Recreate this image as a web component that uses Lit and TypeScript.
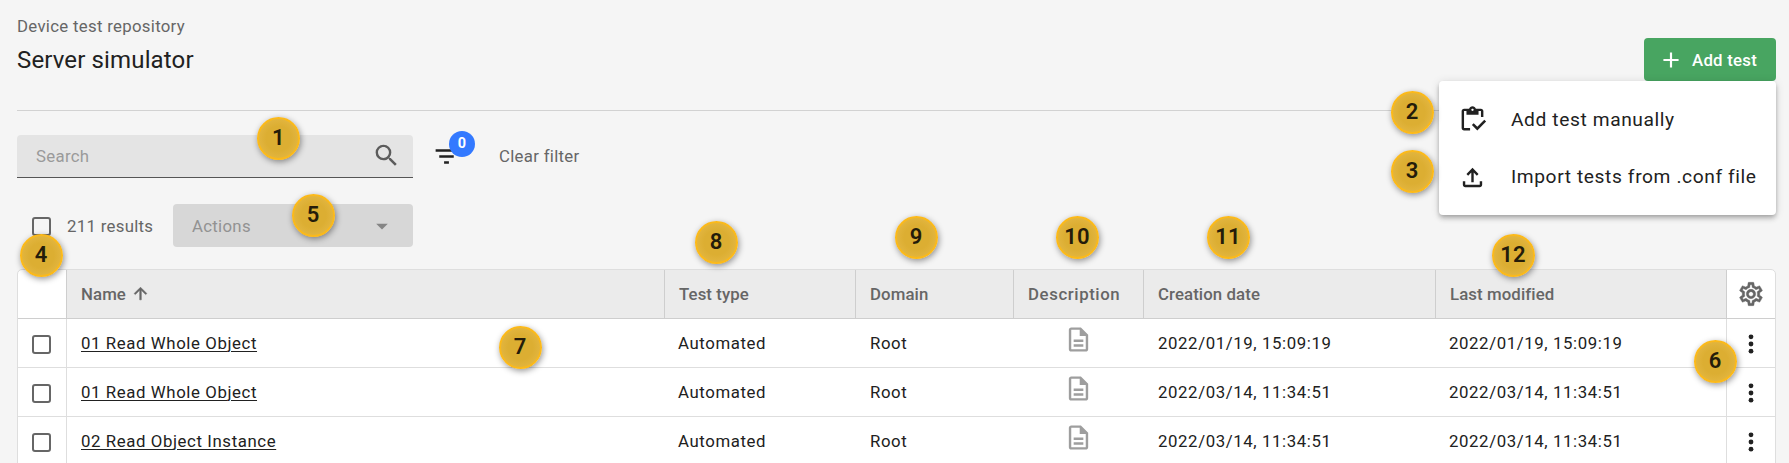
import { LitElement, html, css, svg } from "lit";
import { customElement } from "lit/decorators.js";
import { styleMap } from "lit/directives/style-map.js";

interface Row { name: string; type: string; domain: string; created: string; modified: string; }

const ROWS: Row[] = [
  { name: "01 Read Whole Object", type: "Automated", domain: "Root", created: "2022/01/19, 15:09:19", modified: "2022/01/19, 15:09:19" },
  { name: "01 Read Whole Object", type: "Automated", domain: "Root", created: "2022/03/14, 11:34:51", modified: "2022/03/14, 11:34:51" },
  { name: "02 Read Object Instance", type: "Automated", domain: "Root", created: "2022/03/14, 11:34:51", modified: "2022/03/14, 11:34:51" },
];

// Callout centres on the page canvas.
const MARKERS: [number, number, number][] = [
  [1, 278.3, 138.3], [2, 1412.1, 112.1], [3, 1412.1, 171.1], [4, 41.2, 255.1],
  [5, 313.1, 215.1], [6, 1715.1, 361.1], [7, 520.1, 347.1], [8, 716.1, 242.1],
  [9, 916.1, 237.1], [10, 1077.1, 237.1], [11, 1228.1, 237.1], [12, 1513.1, 255.1],
];

const ICONS = {
  search: svg`<path d="M15.5 14h-.79l-.28-.27A6.471 6.471 0 0 0 16 9.5 6.5 6.5 0 1 0 9.5 16c1.61 0 3.09-.59 4.23-1.57l.27.28v.79l5 4.99L20.49 19l-4.99-5zm-6 0C7.01 14 5 11.99 5 9.5S7.01 5 9.5 5 14 7.01 14 9.5 11.99 14 9.5 14z"/>`,
  filter: svg`<path d="M10 18h4v-2h-4v2zM3 6v2h18V6H3zm3 7h12v-2H6v2z"/>`,
  plus: svg`<path d="M19 13h-6v6h-2v-6H5v-2h6V5h2v6h6v2z"/>`,
  up: svg`<path d="M4 12l1.41 1.41L11 7.83V20h2V7.83l5.58 5.59L20 12l-8-8-8 8z"/>`,
  gear: svg`<path d="M19.43 12.98c.04-.32.07-.64.07-.98 0-.34-.03-.66-.07-.98l2.11-1.65c.19-.15.24-.42.12-.64l-2-3.46a.5.5 0 0 0-.61-.22l-2.49 1c-.52-.4-1.08-.73-1.69-.98l-.38-2.65A.488.488 0 0 0 14 2h-4c-.25 0-.46.18-.49.42l-.38 2.65c-.61.25-1.17.59-1.69.98l-2.49-1a.566.566 0 0 0-.18-.03c-.17 0-.34.09-.43.25l-2 3.46c-.13.22-.07.49.12.64l2.11 1.65c-.04.32-.07.65-.07.98 0 .33.03.66.07.98l-2.11 1.65c-.19.15-.24.42-.12.64l2 3.46a.5.5 0 0 0 .61.22l2.49-1c.52.4 1.08.73 1.69.98l.38 2.65c.03.24.24.42.49.42h4c.25 0 .46-.18.49-.42l.38-2.65c.61-.25 1.17-.59 1.69-.98l2.49 1c.06.02.12.03.18.03.17 0 .34-.09.43-.25l2-3.46c.12-.22.07-.49-.12-.64l-2.11-1.65zm-1.98-1.71c.04.31.05.52.05.73 0 .21-.02.43-.05.73l-.14 1.13.89.7 1.08.84-.7 1.21-1.27-.51-1.04-.42-.9.68c-.43.32-.84.56-1.25.73l-1.06.43-.16 1.13-.2 1.35h-1.4l-.19-1.35-.16-1.13-1.06-.43c-.43-.18-.83-.41-1.23-.71l-.91-.7-1.06.43-1.27.51-.7-1.21 1.08-.84.89-.7-.14-1.13c-.03-.31-.05-.54-.05-.74s.02-.43.05-.73l.14-1.13-.89-.7-1.08-.84.7-1.21 1.27.51 1.04.42.9-.68c.43-.32.84-.56 1.25-.73l1.06-.43.16-1.13.2-1.35h1.39l.19 1.35.16 1.13 1.06.43c.43.18.83.41 1.23.71l.91.7 1.06-.43 1.27-.51.7 1.21-1.07.85-.89.7.14 1.13zM12 8c-2.21 0-4 1.79-4 4s1.79 4 4 4 4-1.79 4-4-1.79-4-4-4zm0 6c-1.1 0-2-.9-2-2s.9-2 2-2 2 .9 2 2-.9 2-2 2z"/>`,
  doc: svg`<path fill-rule="evenodd" d="M8 16h8v2H8zm0-4h8v2H8zm6-10H6c-1.1 0-2 .9-2 2v16c0 1.1.89 2 1.99 2H18c1.1 0 2-.9 2-2V8l-6-6zm4 18H6V4h7v5h5v11z"/>`,
  dots: svg`<circle cx="12" cy="4.8" r="2.4"/><circle cx="12" cy="12" r="2.4"/><circle cx="12" cy="19.2" r="2.4"/>`,
  caret: svg`<path d="M7 10l5 5 5-5z"/>`,
  clipboard: svg`<path d="M5 5h2v3h10V5h2v5h2V5c0-1.1-.9-2-2-2h-4.18C14.4 1.84 13.3 1 12 1s-2.400.84-2.820 2H5c-1.100 0-2 .9-2 2v14c0 1.100.9 2 2 2h5v-2H5V5zm7-2c.55 0 1 .45 1 1s-.45 1-1 1-1-.45-1-1 .45-1 1-1z"/><path d="M21.750 12.250 16 18l-3.010-3-1.490 1.500L15.990 21l7.260-7.250z"/>`,
  upload: svg`<path d="M11 16V7.850l-2.600 2.600L7 9l5-5 5 5-1.400 1.450-2.600-2.600V16h-2Zm-5 4q-.825 0-1.412-.587Q4 18.825 4 18v-3h2v3h12v-3h2v3q0 .825-.587 1.413Q18.825 20 18 20H6Z"/>`,
};

const icon = (name: keyof typeof ICONS, cls = "") =>
  html`<svg class="icon ${cls}" viewBox="0 0 24 24" aria-hidden="true">${ICONS[name]}</svg>`;

@customElement("app-root")
export class AppRoot extends LitElement {
  static styles = css`
    :host { display: block; position: relative; box-sizing: border-box; height: 463px; overflow: hidden;
      padding: 0 13px 0 17px; background: #f5f5f5; color: #212121; font-family: Roboto, sans-serif;
      font-size: 16.8px; letter-spacing: 0.3px; line-height: 20px; }
    * { box-sizing: border-box; }
    .icon { display: block; flex: none; width: 24px; height: 24px; fill: currentColor; }
    .head { display: flex; justify-content: space-between; height: 111px; border-bottom: 1px solid #d2d2d2; }
    .titles { padding-top: 16px; }
    .crumb { color: #666; }
    .title { margin: 8px 0 0; font-size: 24px; line-height: 32px; font-weight: 400; letter-spacing: 0.14px; }
    .adder { position: relative; padding-top: 38px; }
    .add { display: flex; align-items: center; width: 132px; height: 43px; padding: 0 0 0 14px; border: 0; border-radius: 4px;
      background: #48a561; color: #fff; font: 500 16.8px/20px Roboto, sans-serif; letter-spacing: 0.25px; gap: 8px; }
    .add .icon { width: 26px; height: 26px; }
    .menu { position: absolute; z-index: 2; top: 81px; right: 0; width: 337px; height: 134px; padding: 10px 0; border-radius: 4px;
      background: #fff; box-shadow: 0 2px 4px -1px rgba(0,0,0,.2), 0 4px 5px rgba(0,0,0,.14), 0 1px 10px rgba(0,0,0,.12); }
    .item { display: flex; align-items: center; height: 57px; padding-left: 19px; gap: 24px; font-size: 19.2px; letter-spacing: 0.6px; white-space: nowrap; }
    .item .icon { width: 29px; height: 29px; }
    .item:last-child .icon { margin-top: 2px; }
    .tools { display: flex; align-items: center; height: 43px; margin-top: 24px; }
    .search { display: flex; align-items: center; justify-content: space-between; width: 396px; height: 43px; padding: 0 12px 1px 19px;
      border-radius: 4px 4px 0 0; border-bottom: 1px solid #555; background: #e4e4e4; color: #9a9a9a; }
    .search .icon { width: 29px; height: 29px; color: #5c5c5c; }
    .filter { position: relative; margin-left: 19px; }
    .filter .icon { width: 29px; height: 29px; }
    .count { position: absolute; left: 17px; top: -11px; width: 26px; height: 26px; border-radius: 50%; background: #3379ff; color: #fff;
      font-size: 14.4px; font-weight: 700; line-height: 26px; text-align: center; letter-spacing: 0; }
    .clear { margin-left: 38px; padding-bottom: 2px; color: #666; }
    .bulk { display: flex; align-items: center; height: 43px; margin: 26px 0 22px; padding-left: 15px; color: #666; }
    .box { display: block; width: 19px; height: 19px; border: 2px solid #666; border-radius: 3px; }
    .bulk .box { margin-top: 2px; }
    .total { width: 106px; margin-left: 16px; padding-top: 1px; }
    .actions { display: flex; align-items: center; justify-content: space-between; width: 240px; height: 43px; padding: 0 17px 0 19px;
      border-radius: 4px; background: #d7d7d7; color: #929292; }
    .actions .icon { width: 28px; height: 28px; color: #858585; }
    .table { width: 1759px; border: 1px solid #dedede; border-radius: 5px 5px 0 0; overflow: hidden; background: #fff; }
    .row { display: grid; grid-template-columns: 49px 598px 191px 158px 130px 292px 291px 48px; height: 49px; border-bottom: 1px solid #dedede; letter-spacing: 0.6px; }
    .cell { display: flex; align-items: center; padding: 0 0 1px 14px; white-space: nowrap; }
    .tight { padding-left: 13px; }
    .edge { border-right: 1px solid #dedede; }
    .mid { justify-content: center; padding: 0; }
    .pick { padding: 3px 0 0 14px; }
    .link { color: inherit; text-decoration: underline; text-underline-offset: 2px; text-decoration-thickness: 1px; }
    .header { border-color: #cecece; color: #666; font-weight: 500; letter-spacing: 0.1px; }
    .header .spaced { letter-spacing: 0.6px; }
    .header .fill { background: #ebebeb; border-right: 1px solid #cecece; }
    .header .edge { border-color: #cecece; }
    .arrow { width: 19px; height: 19px; margin: -1px 0 0 5px; stroke: currentColor; stroke-width: .7; }
    .doc { width: 29px; height: 29px; margin: -8px 1px 0 0; color: #9e9e9e; }
    .gear { width: 28px; height: 28px; stroke: currentColor; stroke-width: .35; }
    .dots { width: 24px; height: 24px; margin-top: 1px; }
    .marker { position: absolute; z-index: 3; width: 43px; height: 43px; border: 2px solid #fbb91a; border-radius: 50%;
      margin: -21.5px 0 0 -21.5px; background: radial-gradient(circle, #dcae32 45%, #e8bc4c 100%); color: #241c0a; text-align: center; line-height: 37px;
      font-size: 22px; font-weight: 600; letter-spacing: 0.2px; box-shadow: 1px 2px 6px rgba(0,0,0,.42); }
  `;

  render() {
    return html`
      <header class="head">
        <div class="titles">
          <div class="crumb">Device test repository</div>
          <h1 class="title">Server simulator</h1>
        </div>
        <div class="adder">
          <button class="add">${icon("plus")}<span>Add test</span></button>
          <div class="menu">
            <div class="item">${icon("clipboard")}<span>Add test manually</span></div>
            <div class="item">${icon("upload")}<span>Import tests from .conf file</span></div>
          </div>
        </div>
      </header>
      <div class="tools">
        <div class="search"><span>Search</span>${icon("search")}</div>
        <div class="filter">${icon("filter")}<span class="count">0</span></div>
        <span class="clear">Clear filter</span>
      </div>
      <div class="bulk">
        <span class="box"></span><span class="total">211 results</span>
        <div class="actions"><span>Actions</span>${icon("caret")}</div>
      </div>
      <div class="table">
        <div class="row header">
          <div class="cell edge"></div>
          <div class="cell fill">Name ${icon("up", "arrow")}</div>
          <div class="cell fill">Test type</div>
          <div class="cell fill">Domain</div>
          <div class="cell fill spaced">Description</div>
          <div class="cell fill">Creation date</div>
          <div class="cell fill">Last modified</div>
          <div class="cell mid">${icon("gear", "gear")}</div>
        </div>
        ${ROWS.map((r) => html`
          <div class="row">
            <div class="cell edge pick"><span class="box"></span></div>
            <div class="cell"><a class="link">${r.name}</a></div>
            <div class="cell tight">${r.type}</div>
            <div class="cell">${r.domain}</div>
            <div class="cell mid">${icon("doc", "doc")}</div>
            <div class="cell">${r.created}</div>
            <div class="cell edge tight">${r.modified}</div>
            <div class="cell mid">${icon("dots", "dots")}</div>
          </div>`)}
      </div>
      ${MARKERS.map(([n, x, y]) => html`<span class="marker" style=${styleMap({ left: `${x}px`, top: `${y}px` })}>${n}</span>`)}
    `;
  }
}
